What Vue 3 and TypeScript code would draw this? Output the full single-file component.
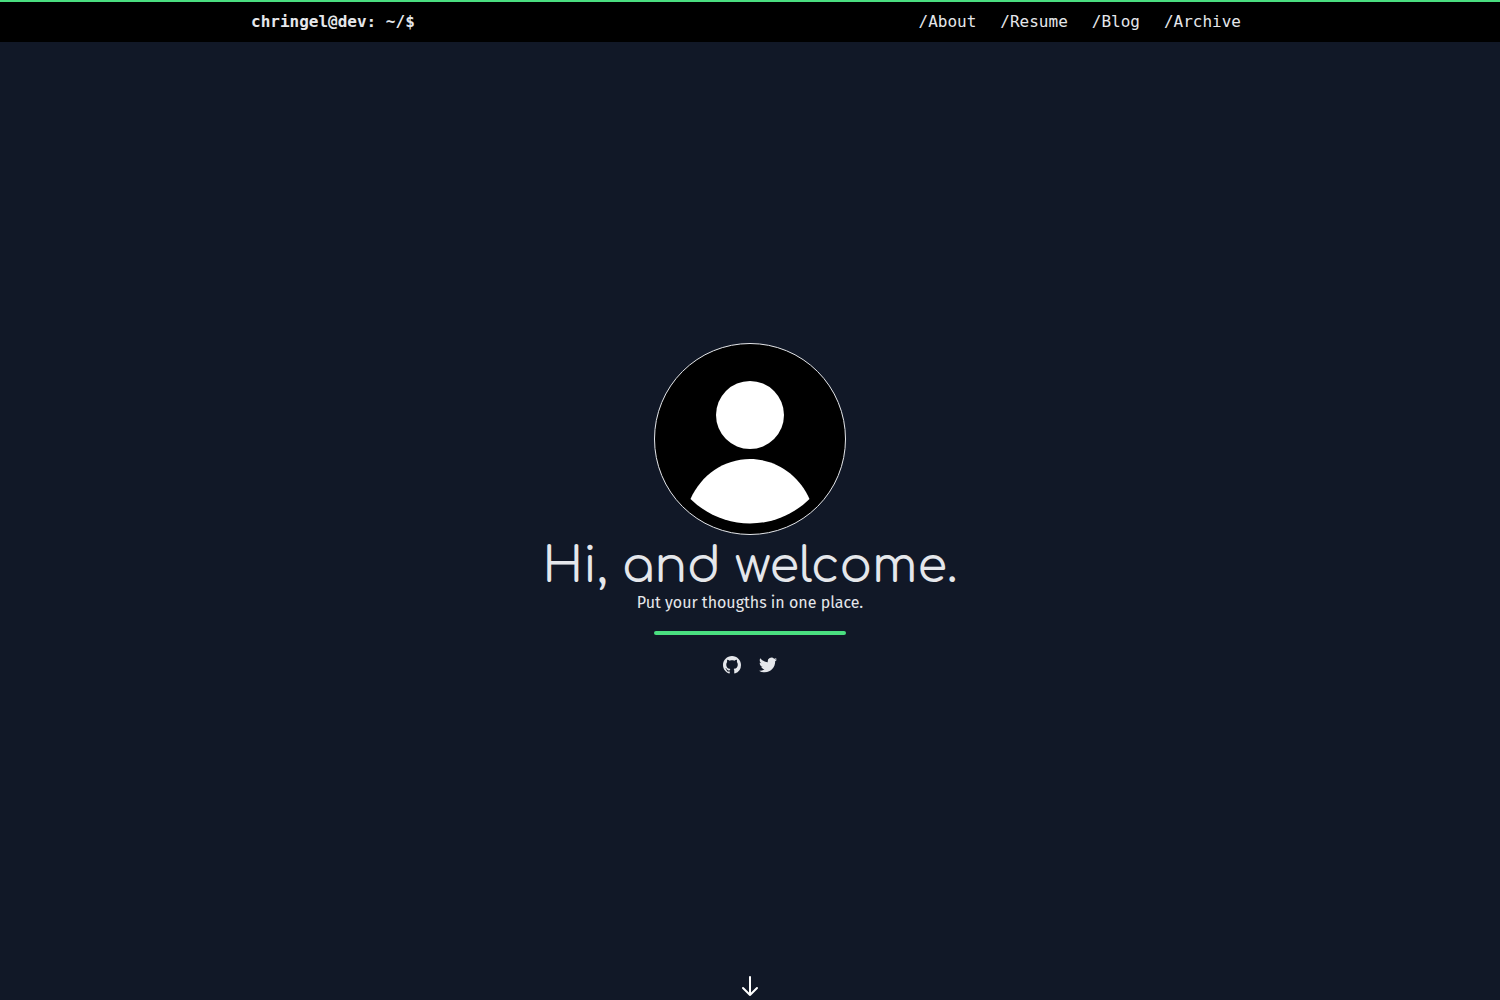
<script setup lang="ts">
interface NavItem {
  label: string
  href: string
}

const navItems: NavItem[] = [
  { label: '/About', href: '#about' },
  { label: '/Resume', href: '#resume' },
  { label: '/Blog', href: '#blog' },
  { label: '/Archive', href: '#archive' },
]
</script>

<template>
  <div class="page">
    <header class="topbar">
      <div class="topbar-inner">
        <a class="brand" href="#">chringel@dev: ~/$</a>
        <nav class="nav">
          <a v-for="item in navItems" :key="item.href" :href="item.href">{{ item.label }}</a>
        </nav>
      </div>
    </header>

    <main class="hero">
      <svg class="avatar" viewBox="0 0 192 192" role="img" aria-label="Profile picture">
        <circle cx="96" cy="96" r="95.5" fill="#000" stroke="#e5e7eb" />
        <circle cx="96" cy="72" r="34" fill="#fff" />
        <path d="M36.5 156C47 132 70 116 96 116s49 16 59.500 40C139 172 118 180.500 96 180.500S53 172 36.500 156z" fill="#fff" />
      </svg>
      <h1 class="title">Hi, and welcome.</h1>
      <p class="subtitle">Put your thougths in one place.</p>
      <div class="divider"></div>
      <div class="social">
        <a href="#github" aria-label="GitHub">
          <svg viewBox="0 0 16 16" fill="currentColor">
            <path d="M8 0C3.58 0 0 3.58 0 8c0 3.54 2.29 6.53 5.47 7.59.4.07.55-.17.55-.38 0-.19-.01-.82-.01-1.49-2.01.37-2.53-.49-2.69-.94-.09-.23-.48-.94-.82-1.13-.28-.15-.68-.52-.01-.53.63-.01 1.08.58 1.23.82.72 1.21 1.87.87 2.33.66.07-.52.28-.87.51-1.07-1.78-.2-3.64-.89-3.64-3.95 0-.87.31-1.59.82-2.15-.08-.2-.36-1.02.08-2.12 0 0 .67-.21 2.2.82.64-.18 1.32-.27 2-.27s1.36.09 2 .27c1.53-1.04 2.2-.82 2.2-.82.44 1.1.16 1.92.08 2.12.51.56.82 1.27.82 2.15 0 3.07-1.87 3.75-3.65 3.95.29.25.54.73.54 1.48 0 1.07-.01 1.93-.01 2.2 0 .21.15.46.55.38A8.01 8.01 0 0 0 16 8c0-4.42-3.58-8-8-8z" />
          </svg>
        </a>
        <a href="#twitter" aria-label="Twitter">
          <svg viewBox="0 0 24 24" fill="currentColor">
            <path d="M23.953 4.570a10 10 0 0 1-2.825.775 4.958 4.958 0 0 0 2.163-2.723c-.951.555-2.005.959-3.127 1.184a4.920 4.920 0 0 0-8.384 4.482C7.690 8.095 4.067 6.130 1.640 3.162a4.822 4.822 0 0 0-.666 2.475c0 1.710.87 3.213 2.188 4.096a4.904 4.904 0 0 1-2.228-.616v.06a4.923 4.923 0 0 0 3.946 4.827 4.996 4.996 0 0 1-2.212.085 4.936 4.936 0 0 0 4.604 3.417 9.867 9.867 0 0 1-6.102 2.105c-.39 0-.779-.023-1.170-.067a13.995 13.995 0 0 0 7.557 2.209c9.053 0 13.998-7.496 13.998-13.985 0-.21 0-.42-.015-.63a9.935 9.935 0 0 0 2.460-2.548l-.047-.020z" />
          </svg>
        </a>
      </div>
    </main>

    <a class="scroll-down" href="#content" aria-label="Scroll down">
      <svg viewBox="0 0 24 24" fill="none" stroke="currentColor" stroke-width="2" stroke-linecap="round" stroke-linejoin="round">
        <path d="M19 14l-7 7m0 0l-7-7m7 7V3" />
      </svg>
    </a>
  </div>
</template>

<style>
body {
  background: #111827;
}
</style>

<style scoped>
.page {
  box-sizing: border-box;
  display: flex;
  flex-direction: column;
  min-height: 100vh;
  padding-bottom: 2px;
  background: #111827;
  color: #e5e7eb;
}

a {
  color: inherit;
  text-decoration: none;
}

.topbar {
  border-top: 2px solid #4ade80;
  background: #000;
  font-family: "DejaVu Sans Mono", monospace;
  font-size: 16px;
  line-height: 24px;
}

.topbar-inner {
  box-sizing: border-box;
  display: flex;
  flex-wrap: wrap;
  justify-content: space-between;
  max-width: 998px;
  margin: 0 auto;
  padding: 8px 8px 8px 0;
}

.brand {
  font-weight: 700;
}

.nav {
  display: flex;
  gap: 24px;
}

.hero {
  flex: 1;
  display: flex;
  flex-direction: column;
  align-items: center;
  justify-content: center;
  padding-top: 2px;
  text-align: center;
}

.avatar {
  width: 192px;
  height: 192px;
}

.title {
  margin: 8px 0 0;
  font-family: Comfortaa, Lato, sans-serif;
  font-size: 48px;
  font-weight: 400;
  line-height: 48px;
}

.subtitle {
  margin: 0;
  font-family: "Fira Sans", "Noto Sans", sans-serif;
  font-size: 16px;
  line-height: 24px;
}

.divider {
  width: 192px;
  height: 4px;
  margin: 16px 0 20px;
  border-radius: 2px;
  background: #4ade80;
}

.social {
  display: flex;
  gap: 16px;
}

.social a {
  display: flex;
  align-items: center;
  justify-content: center;
  width: 20px;
  height: 20px;
}

.social svg {
  width: 18px;
  height: 18px;
}

.scroll-down {
  align-self: center;
  width: 24px;
  height: 24px;
  color: #fff;
}

.scroll-down svg {
  display: block;
}
</style>
